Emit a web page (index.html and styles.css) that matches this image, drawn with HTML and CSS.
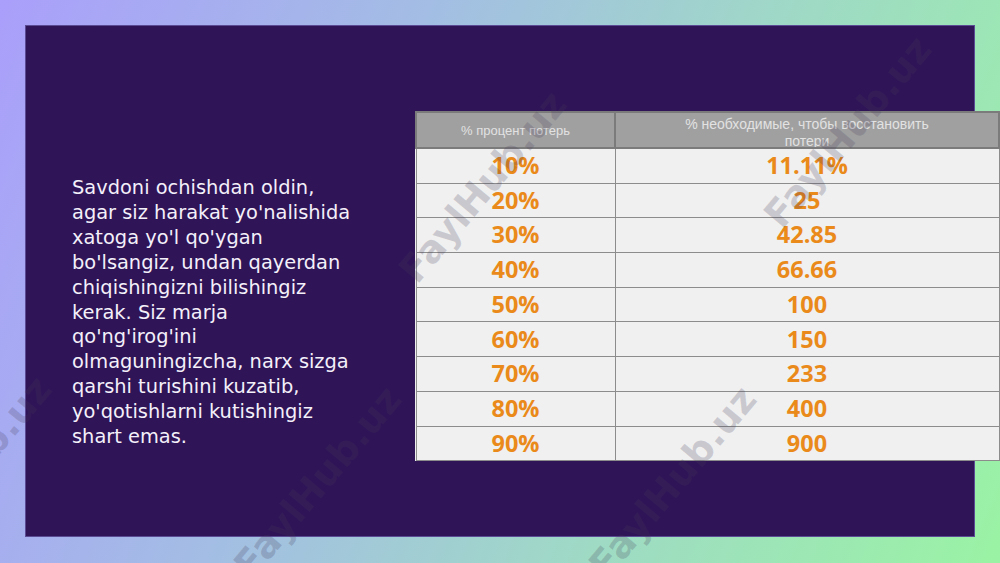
FILE: index.html
```html
<!DOCTYPE html>
<html lang="uz">
<head>
<meta charset="utf-8">
<title>Savdo</title>
<link rel="stylesheet" href="styles.css">
</head>
<body>
<div class="slide">
  <div class="panel">
    <p class="lead">Savdoni ochishdan oldin,<br>agar siz harakat yo'nalishida<br>xatoga yo'l qo'ygan<br>bo'lsangiz, undan qayerdan<br>chiqishingizni bilishingiz<br>kerak. Siz marja<br>qo'ng'irog'ini<br>olmaguningizcha, narx sizga<br>qarshi turishini kuzatib,<br>yo'qotishlarni kutishingiz<br>shart emas.</p>
    <table class="loss">
      <thead>
        <tr>
          <th class="c1">% процент потерь</th>
          <th class="c2"><div class="clip">% необходимые, чтобы восстановить<br>потери</div></th>
        </tr>
      </thead>
      <tbody>
        <tr><td>10%</td><td>11.11%</td></tr>
        <tr><td>20%</td><td>25</td></tr>
        <tr><td>30%</td><td>42.85</td></tr>
        <tr><td>40%</td><td>66.66</td></tr>
        <tr><td>50%</td><td>100</td></tr>
        <tr><td>60%</td><td>150</td></tr>
        <tr><td>70%</td><td>233</td></tr>
        <tr><td>80%</td><td>400</td></tr>
        <tr><td>90%</td><td>900</td></tr>
      </tbody>
    </table>
  </div>
  <span class="wm wm1">FaylHub.uz</span>
  <span class="wm wm2">FaylHub.uz</span>
  <span class="wm wm3">FaylHub.uz</span>
  <span class="wm wm4">FaylHub.uz</span>
  <span class="wm wm5">FaylHub.uz</span>
</div>
</body>
</html>
```

FILE: styles.css
```css
html, body {
  margin: 0;
  padding: 0;
}
body {
  width: 1000px;
  height: 563px;
  overflow: hidden;
}
.slide {
  position: relative;
  width: 1000px;
  height: 563px;
  box-sizing: border-box;
  padding: 25px;
  background: linear-gradient(112deg, #aa9ffb 0%, #a3bde4 35%, #9fd9c6 65%, #9af3a4 100%);
  overflow: hidden;
}
.panel {
  display: flex;
  align-items: flex-start;
  width: 950px;
  height: 512px;
  box-sizing: border-box;
  background: #2f1457;
  border: 1px solid #5b4a94;
}
.lead {
  margin: 150px 0 0 46px;
  width: 343px;
  flex: none;
  font-family: "DejaVu Sans", sans-serif;
  font-size: 19.4px;
  line-height: 24.9px;
  color: #f4f0fa;
}
.loss {
  flex: none;
  margin-top: 85px;
  width: 585px;
  border-collapse: collapse;
  background: #f0f0f0;
  border: 1px solid #8a8a8a;
  table-layout: fixed;
}
.loss th {
  height: 34px;
  padding: 0;
  background: #a0a0a0;
  border: 2px solid #7b7b7b;
  color: #e2e2e2;
  font-family: "Liberation Sans", sans-serif;
  font-weight: normal;
  font-size: 13px;
  vertical-align: top;
}
.loss th.c1 {
  width: 197px;
  vertical-align: middle;
}
.c1-text {
  display: block;
}
.clip {
  height: 34px;
  overflow: hidden;
  font-size: 14px;
  line-height: 17px;
  padding-top: 3px;
  box-sizing: border-box;
}
.loss td {
  height: 33.7px;
  padding: 0;
  border: 1px solid #8c8c8c;
  text-align: center;
  font-family: "Open Sans", sans-serif;
  font-weight: 700;
  font-size: 23.5px;
  color: #ea8a1a;
  line-height: 1;
}
.loss td + td {
  border-left: 1px solid #6e6e6e;
}
.wm {
  position: absolute;
  font-family: "DejaVu Sans", sans-serif;
  font-weight: 700;
  font-size: 38px;
  color: rgba(70, 60, 90, 0.22);
  transform: rotate(-50deg);
  white-space: nowrap;
  pointer-events: none;
}
.wm1 { left: 365px; top: 165px; }
.wm2 { left: 730px; top: 110px; }
.wm3 { left: 555px; top: 460px; }
.wm4 { left: 200px; top: 460px; }
.wm5 { left: -150px; top: 450px; }
```
